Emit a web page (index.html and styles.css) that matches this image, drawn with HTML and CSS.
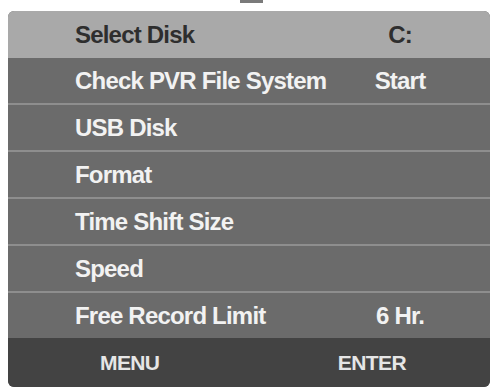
FILE: index.html
```html
<!DOCTYPE html>
<html lang="en">

<head>
    <meta charset="UTF-8">
    <meta name="viewport" content="width=device-width, initial-scale=1.0">
    <title>PVR File System</title>
    <link rel="stylesheet" href="styles.css">
</head>

<body>
    <div class="tab"></div>

    <div class="panel">
        <div class="row selected">
            <span class="label">Select Disk</span>
            <span class="value">C:</span>
        </div>
        <div class="row first">
            <span class="label">Check PVR File System</span>
            <span class="value">Start</span>
        </div>
        <div class="row">
            <span class="label">USB Disk</span>
            <span class="value"></span>
        </div>
        <div class="row">
            <span class="label">Format</span>
            <span class="value"></span>
        </div>
        <div class="row">
            <span class="label">Time Shift Size</span>
            <span class="value"></span>
        </div>
        <div class="row">
            <span class="label">Speed</span>
            <span class="value"></span>
        </div>
        <div class="row">
            <span class="label">Free Record Limit</span>
            <span class="value">6 Hr.</span>
        </div>

        <div class="footer">
            <span>MENU</span>
            <span>ENTER</span>
        </div>
    </div>
</body>

</html>
```

FILE: styles.css
```css
body {
    margin: 0;
    background-color: #fff;
    font-family: "Liberation Sans", Arial, sans-serif;
    font-weight: bold;
}

.tab {
    width: 23px;
    height: 3px;
    margin-left: 240px;
    background-color: #7a7a7a;
}

.panel {
    width: 482px;
    margin: 8px 0 0 8px;
    border-radius: 6px;
    overflow: hidden;
    background-color: #6b6b6b;
}

.row {
    display: grid;
    grid-template-columns: 1fr 104px;
    align-items: center;
    height: 45px;
    padding: 0 38px 0 67px;
    border-top: 2px solid #8e8e8e;
    font-size: 24px;
    letter-spacing: -0.8px;
    white-space: nowrap;
    color: #f2f2f2;
}

.row.selected {
    height: 47px;
    border-top: none;
    background-color: #a9a9a9;
    color: #2e2e2e;
}

.row.first {
    border-top: none;
}

.value {
    text-align: center;
}

.footer {
    display: flex;
    justify-content: space-between;
    align-items: center;
    height: 49px;
    padding: 0 84px 0 92px;
    background-color: #434343;
    color: #e6e6e6;
    font-size: 21px;
    letter-spacing: -0.6px;
}
```
